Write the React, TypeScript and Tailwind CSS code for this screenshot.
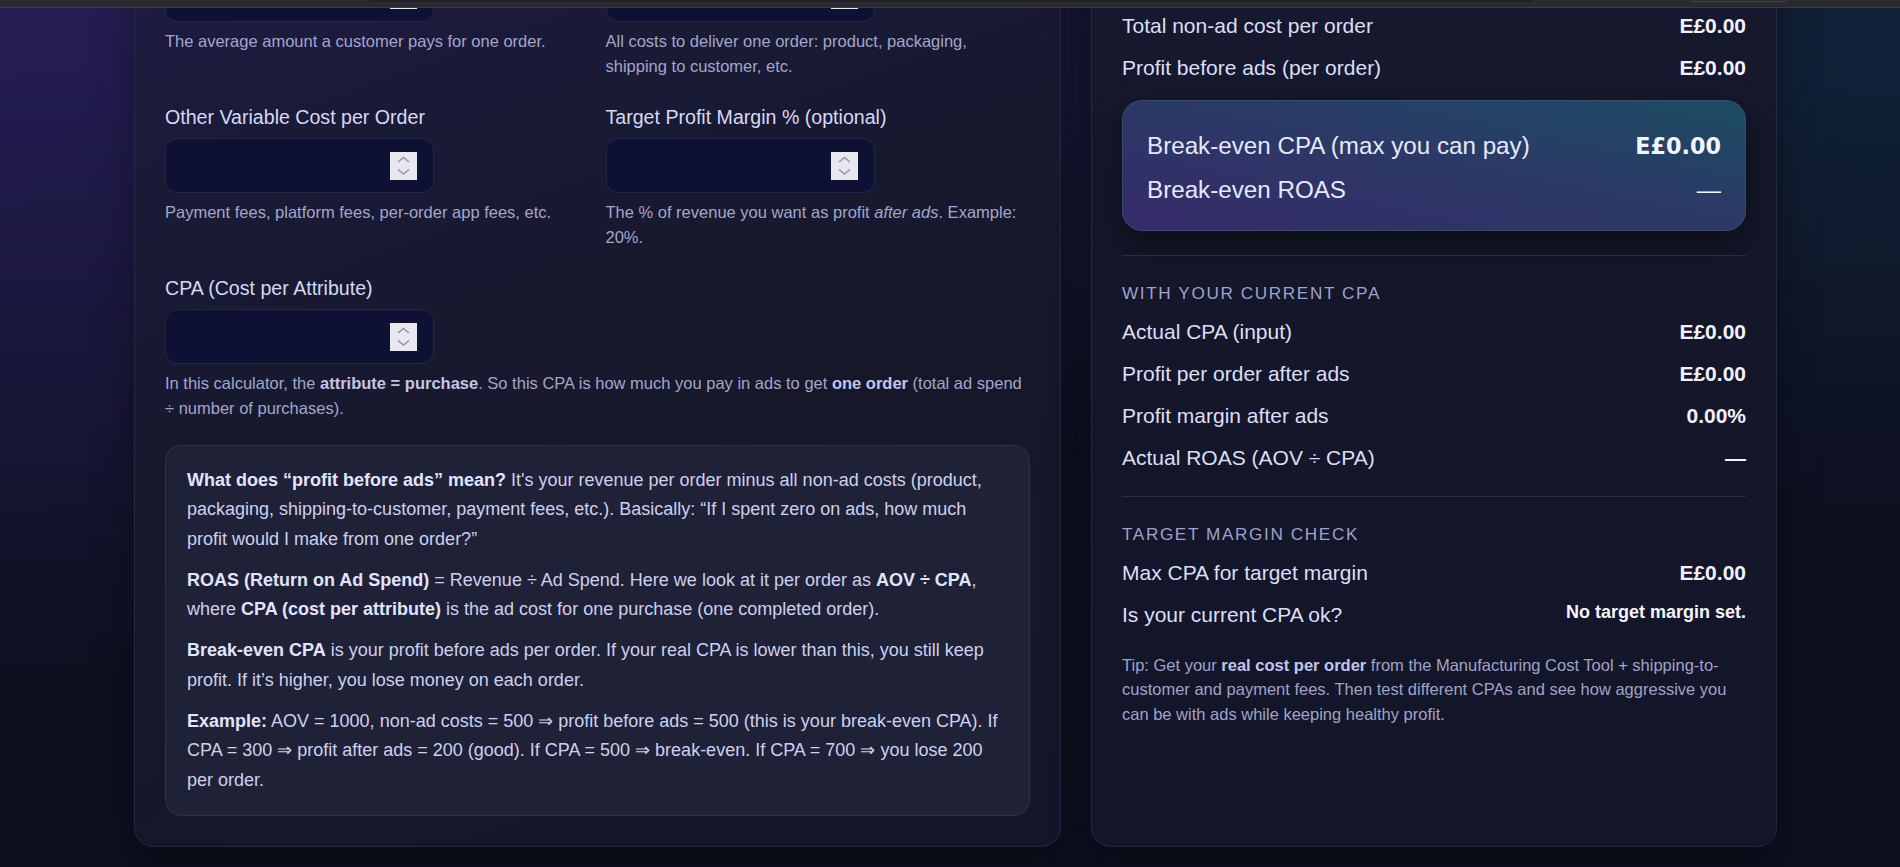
import React from "react";

// Ad profitability calculator: scrolled view of the inputs card and the results card

function Spinner() {
  return (
    <svg width="27" height="28" viewBox="0 0 27 28" className="shrink-0">
      <rect width="27" height="28" fill="#e9e8ef" />
      <path d="M8 10 L13.5 5.5 L19 10" fill="none" stroke="#9694a9" strokeWidth="1.6" />
      <path d="M8 17.5 L13.5 22 L19 17.5" fill="none" stroke="#9694a9" strokeWidth="1.6" />
    </svg>
  );
}

function NumberField() {
  return (
    <div className="flex h-[55px] w-[269px] items-center rounded-[12px] border border-[#23274a] bg-[#0e1133] pl-4 pr-[16px]">
      <input
        type="number"
        className="min-w-0 flex-1 bg-transparent text-[17px] text-[#e5e7ff] outline-none [appearance:textfield] [&::-webkit-inner-spin-button]:appearance-none"
      />
      <Spinner />
    </div>
  );
}

interface FieldProps {
  label: string;
  children: React.ReactNode;
  wide?: boolean;
  helpClass?: string;
}

function Field({ label, children, wide, helpClass = "" }: FieldProps) {
  return (
    <div className={wide ? "col-span-2" : ""}>
      <label className="mb-[7px] block text-[19.6px] leading-[28px] text-[#d6d8f6]">{label}</label>
      <NumberField />
      <p className={`mt-[7px] text-[16.5px] leading-[25px] text-[#a3a6cc] ${helpClass}`}>{children}</p>
    </div>
  );
}

function Row({ label, value, small }: { label: string; value: string; small?: boolean }) {
  return (
    <div className="flex items-start justify-between gap-4 text-[21px] leading-[30px]">
      <span className="text-[#dcdef8]">{label}</span>
      <span
        className={
          small
            ? "text-right text-[18px] font-bold leading-[24px] text-[#f3f4ff]"
            : "text-right font-bold text-[#f1f2ff]"
        }
      >
        {value}
      </span>
    </div>
  );
}

function SectionTitle({ children }: { children: React.ReactNode }) {
  return (
    <h4 className="mt-[25px] mb-[12px] text-[17.2px] uppercase leading-[24px] tracking-[1.6px] text-[#9fa2cb]">
      {children}
    </h4>
  );
}

export default function App() {
  return (
    <div className="relative h-[867px] overflow-hidden bg-[#0e1020] bg-[radial-gradient(ellipse_at_0%_0%,rgba(72,52,170,0.4),transparent_55%),radial-gradient(ellipse_at_100%_5%,rgba(22,84,124,0.26),transparent_40%)] font-['Liberation_Sans',Arial,sans-serif]">
      {/* sticky app header, mostly scrolled off */}
      <div className="absolute inset-x-0 top-0 z-10 h-[8px] border-b border-[#3b3b43] bg-[#2b2a30]">
        <div className="ml-[370px] h-[2px] w-[1163px] rounded-b-[4px] bg-[#222126]" />
        <div className="absolute left-[1688px] top-[-10px] h-[12px] w-[100px] rounded-[5px] border border-[#47464e]" />
      </div>

      <div className="-mt-[99px] ml-[134px] grid grid-cols-[927px_686px] gap-x-[30px]">
        {/* Inputs card */}
        <section className="rounded-[20px] border border-[#252941] bg-[linear-gradient(160deg,#1f1c46_0%,#191a34_28%,#161829_60%,#13152a_100%)] p-[30px] shadow-[0_20px_40px_rgba(0,0,0,0.35)]">
          <div className="grid grid-cols-2 gap-x-[16px] gap-y-[24px]">
            <Field label="Average Order Value (AOV)">The average amount a customer pays for one order.</Field>
            <Field label="Cost per Order (all-in)" helpClass="max-w-[414px]">
              All costs to deliver one order: product, packaging, shipping to customer, etc.
            </Field>
            <Field label="Other Variable Cost per Order">Payment fees, platform fees, per-order app fees, etc.</Field>
            <Field label="Target Profit Margin % (optional)">
              The % of revenue you want as profit <em>after ads</em>. Example: 20%.
            </Field>
            <Field label="CPA (Cost per Attribute)" wide>
              In this calculator, the <b className="text-[#c3c5ea]">attribute = purchase</b>. So this CPA is how much you
              pay in ads to get <b className="text-[#c3c5ea]">one order</b> (total ad spend ÷ number of purchases).
            </Field>
          </div>

          <div className="mt-[24px] flex flex-col gap-[12px] rounded-[16px] border border-[#2d3150] bg-[#1f2236] px-[21px] py-[20px] text-[18px] leading-[29.3px] text-[#cdd0f0]">
            <p>
              <b className="text-[#e2e4ff]">What does “profit before ads” mean?</b> It's your revenue per order minus all
              non-ad costs (product, packaging, shipping-to-customer, payment fees, etc.). Basically: “If I spent zero on
              ads, how much profit would I make from one order?”
            </p>
            <p>
              <b className="text-[#e2e4ff]">ROAS (Return on Ad Spend)</b> = Revenue ÷ Ad Spend. Here we look at it per
              order as <b className="text-[#e2e4ff]">AOV ÷ CPA</b>, where{" "}
              <b className="text-[#e2e4ff]">CPA (cost per attribute)</b> is the ad cost for one purchase (one completed
              order).
            </p>
            <p>
              <b className="text-[#e2e4ff]">Break-even CPA</b> is your profit before ads per order. If your real CPA is
              lower than this, you still keep profit. If it’s higher, you lose money on each order.
            </p>
            <p>
              <b className="text-[#e2e4ff]">Example:</b> AOV = 1000, non-ad costs = 500 ⇒ profit before ads = 500 (this
              is your break-even CPA). If CPA = 300 ⇒ profit after ads = 200 (good). If CPA = 500 ⇒ break-even. If CPA =
              700 ⇒ you lose 200 per order.
            </p>
          </div>
        </section>

        {/* Results card */}
        <section className="rounded-[20px] border border-[#252941] bg-[linear-gradient(180deg,#171a2f_0%,#141729_40%,#13152a_100%)] px-[30px] pt-[25px] pb-[30px] shadow-[0_20px_40px_rgba(0,0,0,0.35)]">
          <div className="flex flex-col gap-[12px]">
            <Row label="Average order value (AOV)" value="E£0.00" />
            <Row label="Cost per order" value="E£0.00" />
            <Row label="Total non-ad cost per order" value="E£0.00" />
            <Row label="Profit before ads (per order)" value="E£0.00" />
          </div>

          <div className="mt-[17px] rounded-[20px] border border-[#3a4b70] bg-[linear-gradient(to_top_right,#362a69,#2b3a66_55%,#1b4c63)] px-[24px] pt-[27.5px] pb-[22.5px] shadow-[0_12px_30px_rgba(0,0,0,0.45)]">
            <div className="flex items-center justify-between text-[24.2px] leading-[34px] text-[#e6e8ff]">
              <span>Break-even CPA (max you can pay)</span>
              <span className="font-['DejaVu_Sans',sans-serif] text-[22.3px] font-bold text-[#f4f5ff]">E£0.00</span>
            </div>
            <div className="mt-[10.7px] flex items-center justify-between text-[24.2px] leading-[34px] text-[#e6e8ff]">
              <span>Break-even ROAS</span>
              <span className="text-[#f4f5ff]">—</span>
            </div>
          </div>

          <div className="mt-[24px] h-px bg-[#272b43]" />
          <SectionTitle>With your current CPA</SectionTitle>
          <div className="flex flex-col gap-[12px]">
            <Row label="Actual CPA (input)" value="E£0.00" />
            <Row label="Profit per order after ads" value="E£0.00" />
            <Row label="Profit margin after ads" value="0.00%" />
            <Row label="Actual ROAS (AOV ÷ CPA)" value="—" />
          </div>

          <div className="mt-[23px] h-px bg-[#272b43]" />
          <SectionTitle>Target margin check</SectionTitle>
          <div className="flex flex-col gap-[12px]">
            <Row label="Max CPA for target margin" value="E£0.00" />
            <Row label="Is your current CPA ok?" value="No target margin set." small />
          </div>

          <p className="mt-[23.5px] text-[16.5px] leading-[24.2px] text-[#a0a3c8]">
            Tip: Get your <b className="text-[#c3c6ea]">real cost per order</b> from the Manufacturing Cost Tool +
            shipping-to-customer and payment fees. Then test different CPAs and see how aggressive you can be with ads
            while keeping healthy profit.
          </p>
        </section>
      </div>
    </div>
  );
}
